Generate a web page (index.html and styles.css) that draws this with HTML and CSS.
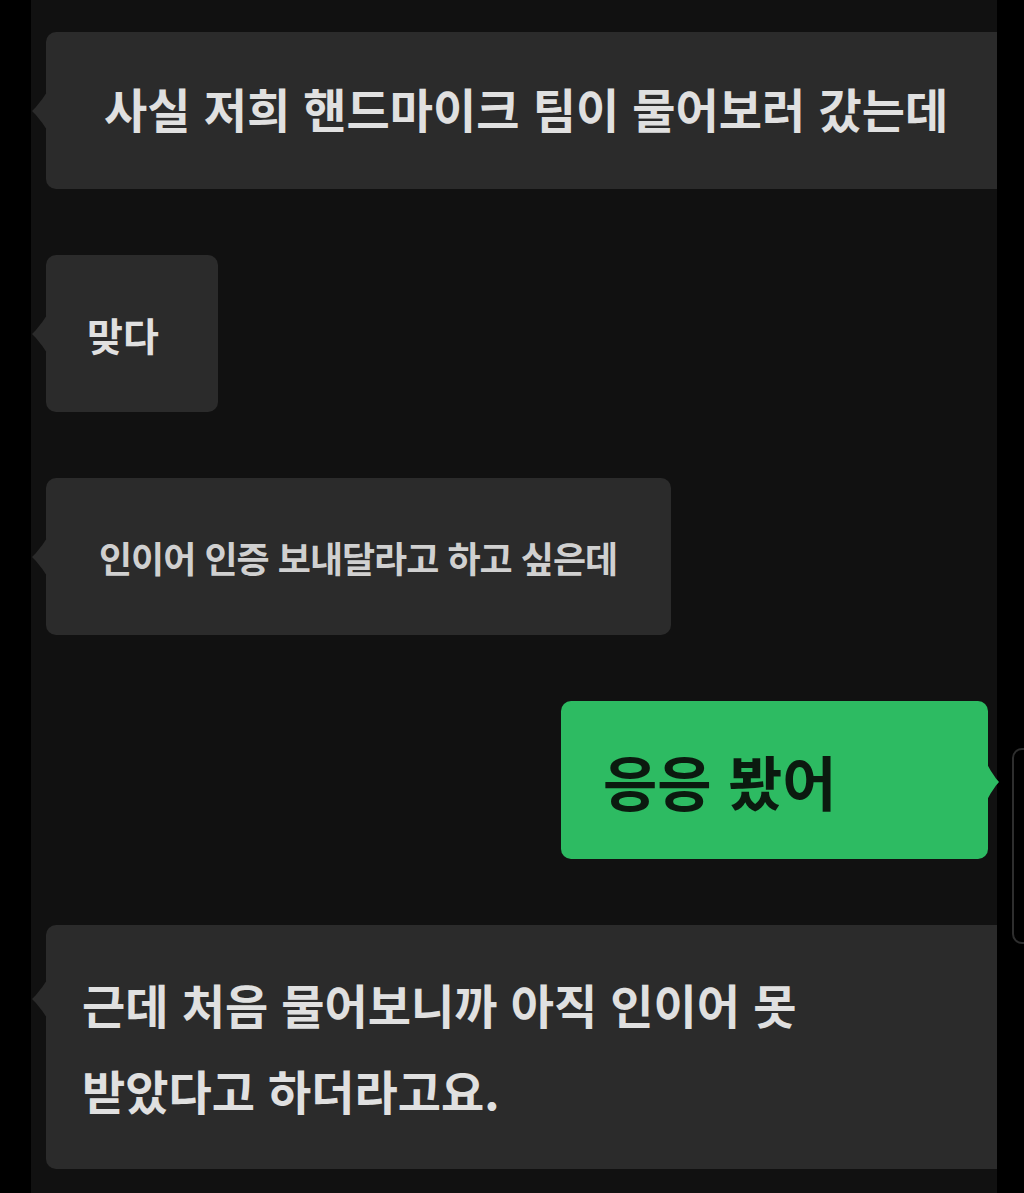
FILE: index.html
```html
<!DOCTYPE html>
<html lang="ko">
<head>
<meta charset="utf-8">
<link rel="stylesheet" href="styles.css">
</head>
<body>
<div class="screen">
  <div class="panel">
    <div class="bubble in b1"><span class="t1">사실 저희 핸드마이크 팀이 물어보러 갔는데</span></div>
    <div class="bubble in b2"><span class="t2">맞다</span></div>
    <div class="bubble in b3"><span class="t3">인이어 인증 보내달라고 하고 싶은데</span></div>
    <div class="row-out">
      <div class="bubble out b4"><span class="t4">응응 봤어</span></div>
    </div>
    <div class="bubble in b5"><p class="t5">근데 처음 물어보니까 아직 인이어 못</p><p class="t5">받았다고 하더라고요.</p></div>
  </div>
  <div class="edge-handle"></div>
</div>
</body>
</html>
```
FILE: styles.css
```css
html, body {
  margin: 0;
  padding: 0;
  background: #000;
}
body {
  font-family: "Noto Sans CJK KR", "Noto Sans", sans-serif;
  width: 1024px;
  height: 1193px;
  overflow: hidden;
}
.screen {
  position: relative;
  width: 1024px;
  height: 1193px;
  background: #000;
}
.panel {
  margin-left: 31px;
  width: 966px;
  height: 1193px;
  background: #111111;
  padding-top: 32px;
  box-sizing: border-box;
  display: flex;
  flex-direction: column;
  gap: 66px;
}
.bubble {
  position: relative;
  background: #2b2b2b;
  border-radius: 10px;
  box-sizing: border-box;
  display: flex;
  align-items: center;
}
.bubble.in {
  margin-left: 15px;
  align-self: flex-start;
}
.bubble.in::before {
  content: "";
  position: absolute;
  left: -14px;
  top: 60px;
  width: 15px;
  height: 38px;
  background: #2b2b2b;
  clip-path: polygon(100% 0, 70% 18%, 25% 40%, 0 50%, 25% 60%, 70% 82%, 100% 100%);
}
.b1 {
  width: 951px;
  height: 157px;
  border-radius: 10px 0 0 10px;
  padding-left: 58px;
}
.b2 {
  width: 172px;
  height: 157px;
  padding-left: 41px;
}
.b3 {
  width: 625px;
  height: 157px;
  padding-left: 53px;
}
.row-out {
  display: flex;
  justify-content: flex-end;
  padding-right: 9px;
}
.b4 {
  width: 427px;
  height: 158px;
  background: #2dbb62;
  padding-left: 42px;
}
.bubble.out::after {
  content: "";
  position: absolute;
  right: -11px;
  top: 63px;
  width: 12px;
  height: 36px;
  background: #2dbb62;
  clip-path: polygon(0 0, 30% 18%, 75% 40%, 100% 50%, 75% 60%, 30% 82%, 0 100%);
}
.b5 {
  width: 951px;
  height: 244px;
  border-radius: 10px 0 0 10px;
  padding-left: 36px;
  flex-direction: column;
  align-items: flex-start;
  justify-content: center;
}
.b5.in::before {
  top: 55px;
}
.t1, .t2, .t3, .t4, .t5 {
  white-space: nowrap;
  color: #e0e0e0;
}
.t1 {
  font-size: 47px;
  font-weight: 700;
  margin-top: -6px;
}
.t2 {
  font-size: 39px;
  font-weight: 700;
}
.t3 {
  font-size: 36px;
  font-weight: 700;
  letter-spacing: -1px;
  color: #d0d0d0;
}
.t4 {
  font-size: 59px;
  font-weight: 700;
  color: #0b1a0f;
}
.t5 {
  margin: 0;
  font-size: 47px;
  font-weight: 700;
  line-height: 86px;
}
.edge-handle {
  position: absolute;
  left: 1012px;
  top: 748px;
  width: 30px;
  height: 196px;
  border: 2px solid #2e2e2e;
  border-radius: 10px;
  box-sizing: border-box;
}
```
